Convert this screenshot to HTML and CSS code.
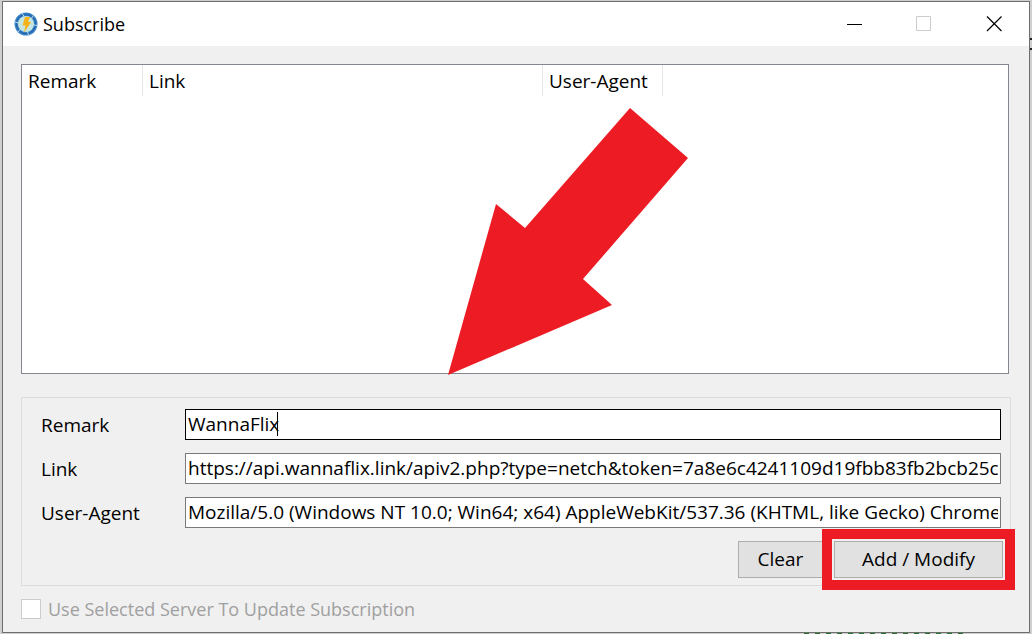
FILE: index.html
```html
<!DOCTYPE html>
<html lang="en">
<head>
<meta charset="utf-8">
<title>Subscribe</title>
<link rel="stylesheet" href="styles.css">
</head>
<body>
<div class="desktop">
  <main class="window">
    <header class="titlebar">
      <svg class="app-icon" viewBox="0 0 24 24" aria-hidden="true">
        <circle cx="12" cy="12" r="11.5" fill="#3d87c8"/>
        <circle cx="12" cy="12" r="9.6" fill="none" stroke="#2668b0" stroke-width="1.6"/>
        <circle cx="12" cy="12" r="8" fill="#c4e6e0"/>
        <path d="M8 1.2l2 3.2M19.5 3.5l-2.2 3M23 13.5l-4-.8M14.5 23l-1-3.5M4 20l2.5-3M.8 10l3.600.8" stroke="#b9dcf0"/>
        <path d="M11 5h5l-2 5h3.2L10 20.500l1.500-7H8.600z" fill="#f9b218"/>
      </svg>
      <h1 class="title">Subscribe</h1>
      <div class="window-controls">
        <button class="control" type="button" aria-label="Minimize"><svg width="16" height="16" viewBox="0 0 16 16"><path d="M1 8.5h15" stroke="#000"/></svg></button>
        <button class="control" type="button" aria-label="Maximize" disabled><svg width="16" height="16" viewBox="0 0 16 16"><path d="M.5.5h14v14H.5z" fill="none" stroke="#ccc"/></svg></button>
        <button class="control" type="button" aria-label="Close"><svg width="16" height="16" viewBox="0 0 16 16"><path d="M1 .5l14.5 14.5M15.5.5L1 15" stroke="#000" stroke-width="1.2"/></svg></button>
      </div>
    </header>
    <div class="content">
      <section class="list">
        <table class="servers">
          <thead>
            <tr><th class="col-remark" scope="col">Remark</th><th class="col-link" scope="col">Link</th><th class="col-agent" scope="col">User-Agent</th></tr>
          </thead>
        </table>
        <svg class="arrow" viewBox="0 0 240 268" aria-hidden="true"><path d="M182 0l58 50-105 121 29 26L0 267 48 96l29 24z" fill="#ed1c24"/></svg>
      </section>
      <form class="editor">
        <label for="remark">Remark</label>
        <div class="field"><input class="focused" id="remark" type="text" value="WannaFlix"><span class="caret"></span></div>
        <label for="link">Link</label>
        <div class="field"><input id="link" type="text" value="https://api.wannaflix.link/apiv2.php?type=netch&amp;token=7a8e6c4241109d19fbb83fb2bcb25c"></div>
        <label for="agent">User-Agent</label>
        <div class="field"><input id="agent" type="text" value="Mozilla/5.0 (Windows NT 10.0; Win64; x64) AppleWebKit/537.36 (KHTML, like Gecko) Chrome/"></div>
        <div class="actions">
          <button class="button clear" type="button">Clear</button>
          <div class="marked"><button class="button modify" type="button">Add / Modify</button></div>
        </div>
      </form>
      <label class="option"><input type="checkbox" disabled><span>Use Selected Server To Update Subscription</span></label>
    </div>
  </main>
</div>
</body>
</html>
```

FILE: styles.css
```css
* { box-sizing: border-box; }

body {
  margin: 0;
  font: 19px/26px "Open Sans", "Noto Sans", sans-serif;
  color: #000;
}

.desktop {
  display: flex;
  min-height: 100vh;
  padding: 1px 2px;
  background:
    linear-gradient(#222, #222) right 38px / 3px 2px no-repeat,
    linear-gradient(#222, #222) right 48px / 3px 2px no-repeat,
    repeating-linear-gradient(90deg, #277327 0 5px, #cfcfcf 5px 11px) 804px 100% / 165px 1px no-repeat,
    #cfcfcf;
}

.window {
  flex: 1;
  display: flex;
  flex-direction: column;
  border: 1px solid #6e6e6e;
  background: #f0f0f0;
}

.titlebar {
  display: flex;
  align-items: center;
  height: 44px;
  padding-left: 11px;
  background: #fff;
}

.app-icon { width: 24px; height: 24px; }

.title {
  flex: 1;
  margin: 0 0 0 5px;
  font: 400 18px/26px "Open Sans", "Noto Sans", sans-serif;
}

.window-controls { display: flex; }

.control {
  display: grid;
  place-items: center;
  width: 70px;
  height: 44px;
  padding: 0;
  border: 0;
  background: none;
}

.content {
  flex: 1;
  display: flex;
  flex-direction: column;
  padding: 18px 18px 10px;
}

.list {
  position: relative;
  flex: 1;
  margin-right: 2px;
  border: 1px solid #828790;
  background: #fff;
}

.servers {
  table-layout: fixed;
  width: 641px;
  border-collapse: separate;
  border-spacing: 0;
}

.servers th {
  height: 31px;
  padding: 0 6px;
  border-right: 1px solid #e5e5e5;
  font-weight: 400;
  text-align: left;
}

.col-remark { width: 121px; }
.col-link { width: 400px; }
.col-agent { width: 120px; }

.arrow {
  position: absolute;
  left: 426px;
  top: 43px;
  width: 240px;
  height: 268px;
}

.editor {
  display: grid;
  grid-template-columns: 144px 1fr;
  row-gap: 13px;
  align-items: center;
  margin-top: 23px;
  padding: 11px 9px 7px 19px;
  border: 1px solid #dcdcdc;
}

.field { position: relative; }

.field input {
  display: block;
  width: 100%;
  height: 31px;
  padding: 0 2px 2px;
  border: 1px solid #7a7a7a;
  border-radius: 0;
  background: #fff;
  color: #000;
  font: inherit;
  outline: 0;
}

.field .focused { border-color: #000; }

.caret {
  position: absolute;
  left: 92px;
  top: 3px;
  width: 1px;
  height: 24px;
  background: #000;
}

.actions {
  grid-column: 1 / -1;
  display: flex;
  justify-content: flex-end;
  align-items: center;
}

.button {
  height: 37px;
  padding: 0 0 2px;
  border: 1px solid #adadad;
  border-radius: 0;
  background: #e1e1e1;
  color: #000;
  font: inherit;
}

.clear { width: 85px; }
.modify { display: block; width: 169px; }

.marked {
  margin: -12px -14px -12px -1px;
  padding: 2px;
  border: 10px solid #ed1c24;
  background: #f0f0f0;
}

.option {
  display: flex;
  align-items: center;
  gap: 7px;
  margin-top: 10px;
  color: #a0a0a0;
  font-size: 18px;
}

.option input {
  appearance: none;
  width: 20px;
  height: 20px;
  margin: 0;
  border: 1px solid #ccc;
  background: #fff;
}
```
